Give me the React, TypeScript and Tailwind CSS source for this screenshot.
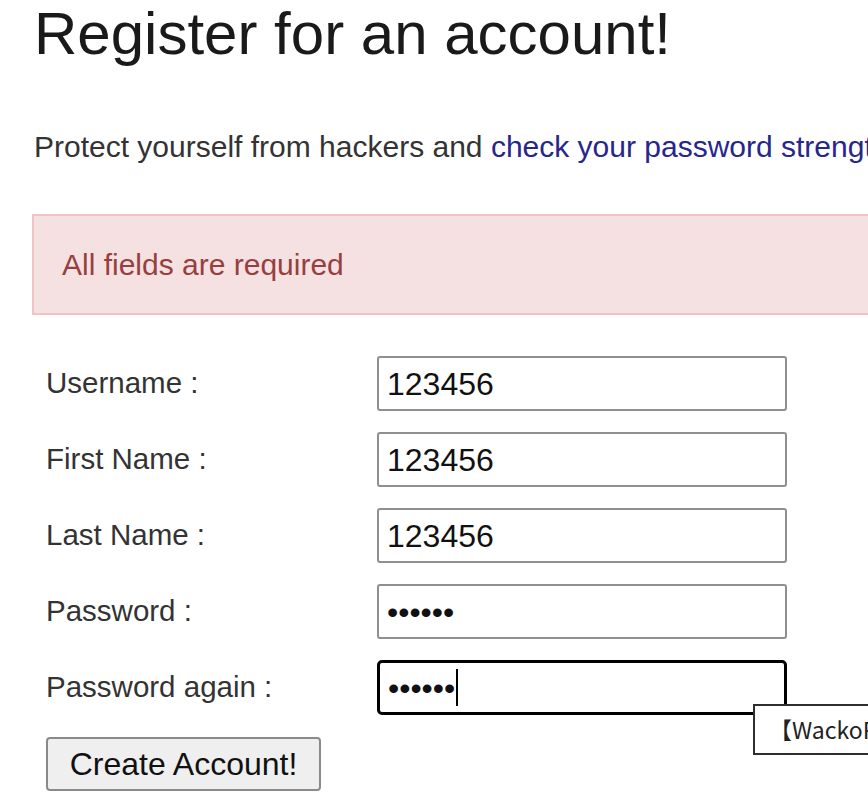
import React from "react";

const rows: { label: string; value: string; type: "text" | "password"; focused?: boolean }[] = [
  { label: "Username :", value: "123456", type: "text" },
  { label: "First Name :", value: "123456", type: "text" },
  { label: "Last Name :", value: "123456", type: "text" },
  { label: "Password :", value: "123456", type: "password" },
  { label: "Password again :", value: "123456", type: "password", focused: true },
];

function FakeInput({ value, type, focused }: { value: string; type: "text" | "password"; focused?: boolean }) {
  const shown = type === "password" ? "\u2022".repeat(value.length) : value;
  return (
    <div
      className={
        "h-[55px] w-[410px] bg-white flex items-center pl-[8px] text-[32px] text-[#111] " +
        (focused
          ? "border-[3px] border-black rounded-[5px] pl-[7px]"
          : "border-2 border-[#8f8f8f] rounded-[3px]")
      }
    >
      <span className="leading-none">{shown}</span>
      {focused && <span className="ml-[1px] inline-block w-[2px] h-[37px] bg-black" />}
    </div>
  );
}

export default function App() {
  return (
    <div
      className="relative w-[868px] h-[810px] overflow-hidden bg-white text-[#333]"
      style={{ fontFamily: '"Liberation Sans", Arial, sans-serif' }}
    >
      <div className="pl-[34px] pt-px">
        <h1 className="m-0 text-[60px] leading-[66px] font-normal text-[#1a1a1a] whitespace-nowrap">
          Register for an account!
        </h1>
        <p className="mt-[58px] text-[30px] leading-[43px] whitespace-nowrap">
          Protect yourself from hackers and{" "}
          <a className="text-[#26268c]" href="#">
            check your password strength
          </a>
        </p>
        <div className="mt-[46px] -ml-[2px] w-[900px] border-2 border-[#f0c4c6] bg-[#f5e1e2] pl-[28px] py-[28px] text-[30px] leading-[41px] text-[#973f3f]">
          All fields are required
        </div>
        <div className="mt-[41px] grid grid-cols-[343px_410px] gap-y-[21px]">
          {rows.map((r) => (
            <React.Fragment key={r.label}>
              <div className="pl-[12px] flex items-center text-[29.5px] text-[#333]">{r.label}</div>
              <FakeInput value={r.value} type={r.type} focused={r.focused} />
            </React.Fragment>
          ))}
        </div>
        <div className="mt-[22px] pl-[12px]">
          <button className="h-[54px] w-[275px] bg-[#efefef] border-2 border-[#8a8a8a] rounded-[4px] text-[32px] text-[#111] flex items-center justify-center">
            Create Account!
          </button>
        </div>
      </div>
      <div
        className="absolute left-[753px] top-[704px] h-[51px] w-[200px] bg-white border-2 border-[#2e2e2e] flex items-center pl-[14px] text-[23px] text-[#222] whitespace-nowrap"
        style={{ fontFamily: '"Noto Sans CJK SC", "Noto Sans", sans-serif' }}
      >
        【WackoPicko】
      </div>
    </div>
  );
}
